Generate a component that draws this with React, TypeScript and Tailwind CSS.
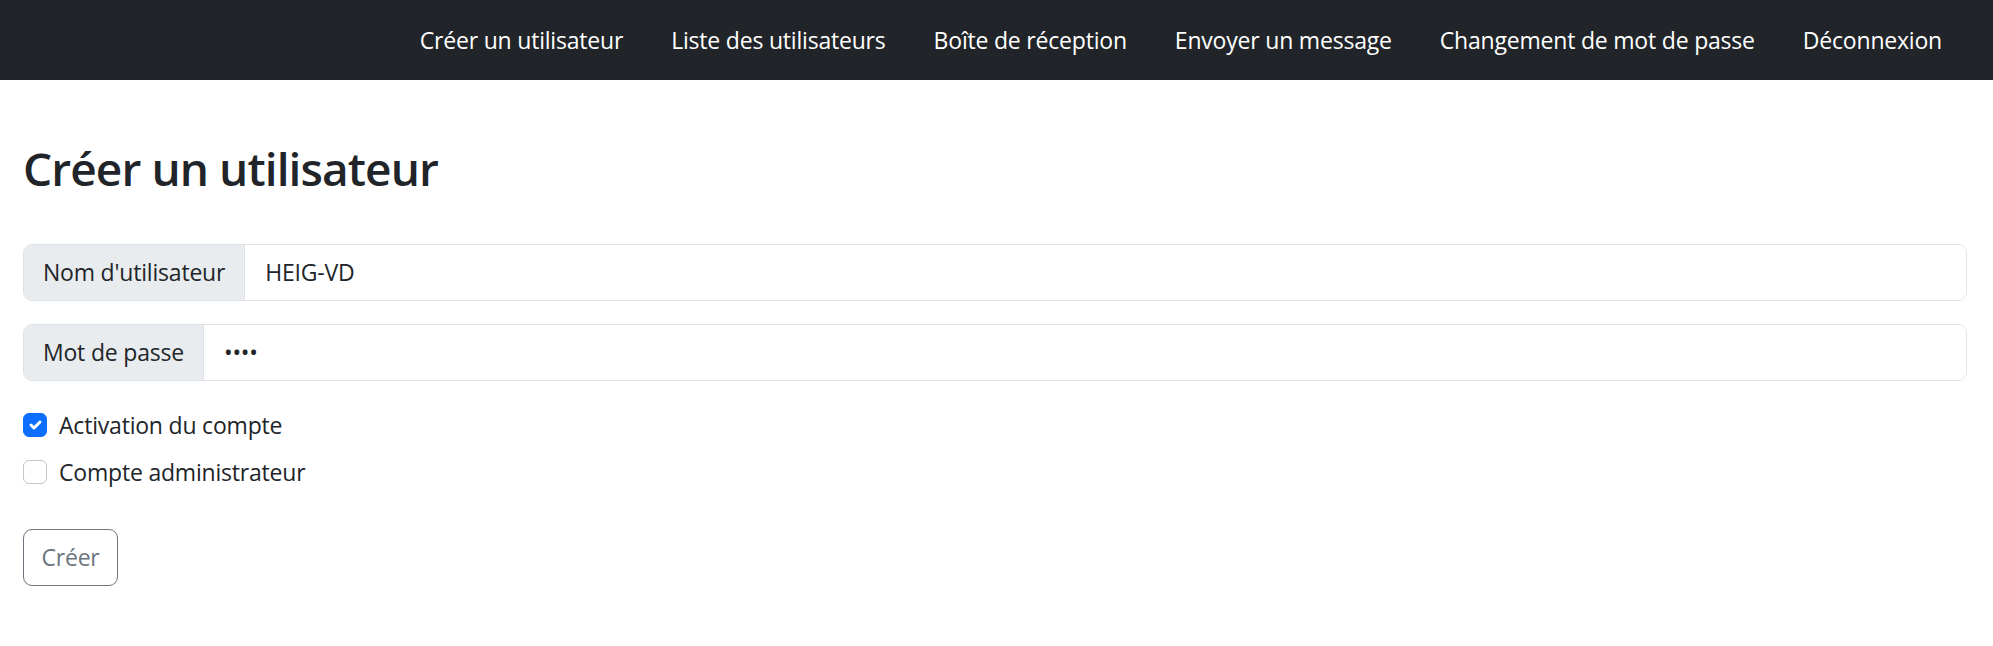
import React from 'react';

const links = [
  'Créer un utilisateur',
  'Liste des utilisateurs',
  'Boîte de réception',
  'Envoyer un message',
  'Changement de mot de passe',
  'Déconnexion',
];

const Check = ({ checked, label }: { checked: boolean; label: string }) => (
  <label className="flex items-center h-[36px] gap-[12px]">
    <span
      className={`w-[24px] h-[24px] rounded-[6px] flex items-center justify-center ${
        checked ? 'bg-[#0d6efd] border border-[#0d6efd]' : 'bg-white border border-[#c4c6c8]'
      }`}
    >
      {checked && (
        <svg viewBox="0 0 20 20" className="w-[20px] h-[20px]">
          <path d="m6 10 3 3 6-6" fill="none" stroke="#fff" strokeWidth="3" strokeLinecap="round" strokeLinejoin="round" />
        </svg>
      )}
    </span>
    <span>{label}</span>
  </label>
);

const App = () => {
  return (
    <div className="min-h-[646px] bg-white text-[#212529] text-[23px] tracking-[-0.2px] font-['Open_Sans',sans-serif]">
      <nav className="h-[80px] bg-[#212529] flex items-center justify-end gap-[48px] pr-[51px]">
        {links.map((l) => (
          <a key={l} href="#" className="text-white leading-[36px]">
            {l}
          </a>
        ))}
      </nav>

      <main className="pl-[23px] pr-[26px]">
        <h1 className="mt-[59px] text-[46px] leading-[58px] font-semibold tracking-[-0.9px]">
          Créer un utilisateur
        </h1>

        <form className="mt-[47px]" onSubmit={(e) => e.preventDefault()}>
          <div className="flex h-[57px] border border-[#dee2e6] rounded-[9px] overflow-hidden">
            <span className="flex items-center px-[19px] bg-[#e9ecef] border-r border-[#dee2e6]">
              Nom d'utilisateur
            </span>
            <input
              type="text"
              defaultValue="HEIG-VD"
              readOnly
              className="flex-1 px-[20px] outline-none bg-white"
            />
          </div>

          <div className="flex h-[57px] mt-[23px] border border-[#dee2e6] rounded-[9px] overflow-hidden">
            <span className="flex items-center px-[19px] bg-[#e9ecef] border-r border-[#dee2e6]">
              Mot de passe
            </span>
            <input
              type="password"
              defaultValue="1234"
              readOnly
              className="flex-1 px-[20px] outline-none bg-white"
            />
          </div>

          <div className="mt-[26px] flex flex-col gap-[11px]">
            <Check checked label="Activation du compte" />
            <Check checked={false} label="Compte administrateur" />
          </div>

          <button
            type="submit"
            className="mt-[39px] h-[57px] w-[95px] border border-[#6c757d] rounded-[9px] text-[#6c757d]"
          >
            Créer
          </button>
        </form>
      </main>
    </div>
  );
};

export default App;
